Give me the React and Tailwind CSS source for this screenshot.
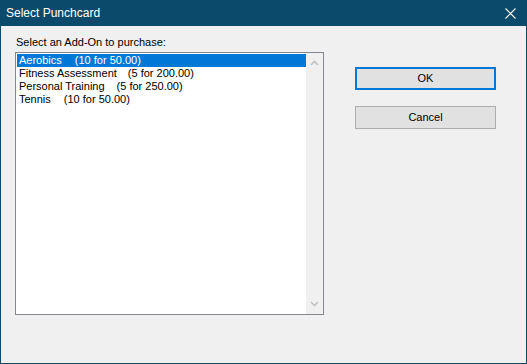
import React, { useState } from 'react';

const items = [
  { name: 'Aerobics', deal: '(10 for 50.00)', gap: 13 },
  { name: 'Fitness Assessment', deal: '(5 for 200.00)', gap: 11 },
  { name: 'Personal Training', deal: '(5 for 250.00)', gap: 12 },
  { name: 'Tennis', deal: '(10 for 50.00)', gap: 13 },
];

function Chevron({ down }) {
  return (
    <svg width="9" height="6" viewBox="0 0 9 6" className="block">
      <path
        d={down ? 'M1 1 L4.5 4.5 L8 1' : 'M1 5 L4.5 1.5 L8 5'}
        fill="none"
        stroke="#c2c2c2"
        strokeWidth="1.6"
      />
    </svg>
  );
}

export default function App() {
  const [selected, setSelected] = useState(0);

  return (
    <div
      className="w-[527px] h-[364px] flex flex-col bg-[#0b4a6b] px-px pb-px text-[11px] text-black"
      style={{ fontFamily: '"Liberation Sans", Arial, sans-serif' }}
    >
      {/* Title bar */}
      <div className="h-[26px] flex items-center justify-between text-white shrink-0">
        <span className="pl-[5px] text-[12px] leading-none">Select Punchcard</span>
        <svg width="11" height="11" viewBox="0 0 11 11" className="mr-[10px]">
          <path d="M0.5 0.5 L10.5 10.5 M10.5 0.5 L0.5 10.5" stroke="#fff" strokeWidth="1.1" />
        </svg>
      </div>

      {/* Body */}
      <div className="flex-1 bg-[#f0f0f0] flex pl-[14px] pt-[8px]">
        <div className="flex flex-col">
          <div className="h-[16px] leading-[16px] pl-px">Select an Add-On to purchase:</div>
          <div className="mt-[2px] w-[309px] h-[263px] border border-[#828790] bg-white flex">
            <div className="flex-1 pt-px pl-px">
              {items.map((it, i) => (
                <div
                  key={it.name}
                  onClick={() => setSelected(i)}
                  className={
                    'h-[13px] leading-[13px] pl-[2px] whitespace-nowrap cursor-default ' +
                    (i === selected ? 'bg-[#0078d7] text-white' : '')
                  }
                >
                  <span>{it.name}</span>
                  <span style={{ marginLeft: it.gap }}>{it.deal}</span>
                </div>
              ))}
            </div>
            <div className="w-[17px] bg-[#f0f0f0] flex flex-col items-center justify-between py-[7px]">
              <Chevron />
              <Chevron down />
            </div>
          </div>
        </div>

        <div className="flex flex-col ml-[31px] pt-[33px] gap-[16px]">
          <button className="w-[141px] h-[23px] bg-[#e1e1e1] border-2 border-[#0078d7] flex items-center justify-center">
            OK
          </button>
          <button className="w-[141px] h-[23px] bg-[#e1e1e1] border border-[#adadad] flex items-center justify-center">
            Cancel
          </button>
        </div>
      </div>
    </div>
  );
}
